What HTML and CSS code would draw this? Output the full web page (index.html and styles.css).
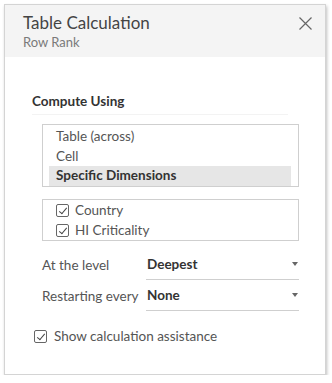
FILE: index.html
```html
<!DOCTYPE html>
<html lang="en">
<head>
  <meta charset="UTF-8" />
  <title>Table Calculation</title>
  <link rel="stylesheet" href="styles.css">
</head>
<body>
  <div class="dialog">
    <header class="dialog-head">
      <div>
        <h1>Table Calculation</h1>
        <p class="sub">Row Rank</p>
      </div>
      <button class="close" aria-label="Close">
        <svg width="13" height="13" viewBox="0 0 13 13"><path d="M0.5 0.5L12.5 12.5M12.5 0.5L0.5 12.5" stroke="#666" stroke-width="1.2" fill="none"/></svg>
      </button>
    </header>

    <div class="dialog-body">
      <h2>Compute Using</h2>

      <ul class="listbox">
        <li>Table (across)</li>
        <li>Cell</li>
        <li class="selected">Specific Dimensions</li>
      </ul>

      <ul class="checklist">
        <li><span class="check"></span>Country</li>
        <li><span class="check"></span>HI Criticality</li>
      </ul>

      <div class="field first">
        <span class="field-label">At the level</span>
        <div class="dropdown">Deepest<span class="caret"></span></div>
      </div>
      <div class="field">
        <span class="field-label">Restarting every</span>
        <div class="dropdown">None<span class="caret"></span></div>
      </div>

      <label class="assist"><span class="check"></span>Show calculation assistance</label>
    </div>
  </div>
</body>
</html>
```

FILE: styles.css
```css
* {
  box-sizing: border-box;
  margin: 0;
  padding: 0;
}
body {
  font-family: Lato, 'Open Sans', sans-serif;
  background: #fff;
  color: #333;
  padding: 4px 0 0 4px;
}

.dialog {
  width: 322px;
  height: 371px;
  background: #fff;
  border: 1px solid #d4d4d4;
  box-shadow: 1px 2px 3px rgba(0,0,0,0.25);
}

/* Header strip */
.dialog-head {
  background: #f4f4f4;
  height: 52px;
  padding: 8px 12px 0 18px;
  display: flex;
  justify-content: space-between;
  align-items: flex-start;
}
.dialog-head h1 {
  font-size: 17px;
  font-weight: 400;
  color: #444;
  line-height: 20px;
}
.dialog-head .sub {
  font-size: 13px;
  color: #7a7a7a;
  line-height: 18px;
}
.close {
  border: none;
  background: none;
  margin-top: 4px;
  margin-right: 1px;
  display: flex;
}

.dialog-body {
  padding: 35px 0 0 27px;
  font-size: 13.5px;
}
.dialog-body h2 {
  font-size: 13.5px;
  font-weight: 700;
  color: #333;
  line-height: 18px;
  width: 256px;
  padding-bottom: 4px;
  border-bottom: 1px solid #f3f3f3;
}

/* Option list */
.listbox {
  list-style: none;
  margin: 9px 0 0 10px;
  width: 257px;
  height: 63px;
  border: 1px solid #cfcfcf;
  padding: 2px 7px 0 6px;
  color: #555;
}
.listbox li {
  line-height: 19.5px;
  padding-left: 7px;
}
.listbox li.selected {
  background: #e6e6e6;
  font-weight: 700;
  color: #333;
}

/* Dimension checkboxes */
.checklist {
  list-style: none;
  margin: 12px 0 0 10px;
  width: 257px;
  height: 42px;
  border: 1px solid #cfcfcf;
  padding: 0 0 0 13px;
  color: #555;
}
.checklist li {
  display: flex;
  align-items: center;
  gap: 6px;
  line-height: 20px;
}

.check {
  width: 13px;
  height: 13px;
  border: 1px solid #666;
  border-radius: 2px;
  display: inline-block;
  position: relative;
  flex: none;
}
.check::after {
  content: "";
  position: absolute;
  left: 3.5px;
  top: 1px;
  width: 3px;
  height: 7px;
  border: solid #444;
  border-width: 0 1.3px 1.3px 0;
  transform: rotate(40deg);
}

/* Level / restart rows */
.field {
  display: flex;
  align-items: flex-end;
  margin-left: 10px;
  height: 31px;
}
.field.first {
  margin-top: 8px;
}
.field-label {
  width: 104px;
  color: #555;
  line-height: 22px;
  padding-bottom: 4px;
}
.dropdown {
  width: 153px;
  border-bottom: 1px solid #cfcfcf;
  font-weight: 700;
  color: #333;
  line-height: 22px;
  padding: 0 0 4px 1px;
  display: flex;
  justify-content: space-between;
  align-items: center;
}
.caret {
  width: 0;
  height: 0;
  border-left: 3.5px solid transparent;
  border-right: 3.5px solid transparent;
  border-top: 4px solid #666;
  margin-right: 1px;
}

.assist {
  display: flex;
  align-items: center;
  gap: 7px;
  margin-top: 17px;
  margin-left: 2px;
  color: #555;
}
```
